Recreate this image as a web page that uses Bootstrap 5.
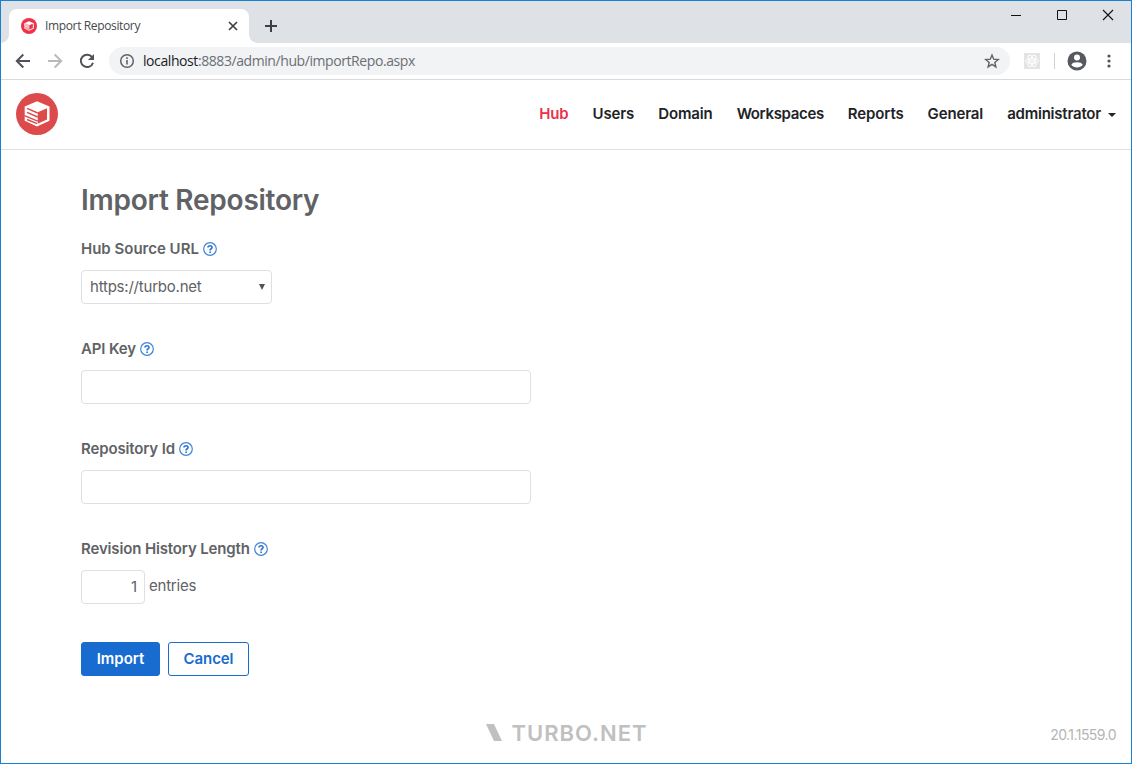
<!DOCTYPE html>
<html lang="en">
<head>
<meta charset="utf-8">
<title>Import Repository</title>
<link href="https://cdn.jsdelivr.net/npm/bootstrap@5.3.0/dist/css/bootstrap.min.css" rel="stylesheet">
<style>
html,body{height:100%;overflow:hidden}
body{font-family:Inter,"Liberation Sans",sans-serif;font-size:15px;line-height:20px;color:#606266;background:#fff}
svg{display:block;flex:none}
.win{height:764px;border:1px solid #1a80d2}
.titlebar{height:42px;background:#dee1e6;padding-left:8px}
.tab{position:relative;width:240px;height:34px;margin-top:8px;background:#fff;border-radius:8px 8px 0 0;padding:0 10px 0 12px;font:12px/34px "Open Sans",sans-serif;color:#45494d}
.tab:before,.tab:after{content:"";position:absolute;bottom:0;width:8px;height:8px}
.tab:before{left:-8px;background:radial-gradient(circle at 0 0,transparent 7.5px,#fff 8px)}
.tab:after{right:-8px;background:radial-gradient(circle at 100% 0,transparent 7.5px,#fff 8px)}
.tab-title{letter-spacing:-.36px}
.new-tab{margin:19px 0 0 16px}
.controls{padding:8px 17px 0 0;gap:34px}
.toolbar{height:37px;border-bottom:1px solid #d9dadc}
.omnibox{width:901px;height:28px;margin-left:14px;background:#f1f3f4;font:14px/28px "Open Sans",sans-serif;color:#6b6f74;padding:0 10px}
.omnibox .url{letter-spacing:-.42px;margin-left:8px}
.omnibox b{font-weight:400;color:#202124}
.site{height:70px;border-bottom:1px solid #dfdfe0;padding:0 15px 2px!important}
.site .navbar-nav{gap:24px}
.site .navbar-nav .nav-link{padding:0;color:#212226;font-weight:600;line-height:20px;letter-spacing:-.13px}
.site .navbar-nav .nav-link.active{color:#ec3049}
.site .navbar-nav .tight{letter-spacing:-.34px}
.site .navbar-nav .user{letter-spacing:-.22px}
.page{padding-left:80px}
h1{font-size:28px;font-weight:600;line-height:36px;margin:32px 0 21px;letter-spacing:-.24px}
.field{height:100px}
.field label{font-weight:600;height:20px;margin-bottom:11px}
.field label svg{margin-bottom:1px}
.field .snug{letter-spacing:-.14px}
.form-control,.form-select{height:34px;border:1px solid #dfdfe1;border-radius:4px;font-size:15px;color:#606266;padding:0 8px;line-height:32px}
.wide{width:450px}
.source{width:191px;letter-spacing:-.22px;background-image:url("data:image/svg+xml,%3csvg xmlns='http://www.w3.org/2000/svg' viewBox='0 0 6 6'%3e%3cpath fill='%23505256' d='M0 0h6L3 6z'/%3e%3c/svg%3e");background-size:6px 6px;background-position:right 6px center}
.count{width:64px;padding:0 7px 2px}
.entries{letter-spacing:-.22px;padding:0 0 2px}
.btn{height:34px;border-radius:3px;padding:0;font-size:15px;font-weight:600;line-height:32px}
.go{width:79px;background:#186bcf;color:#fff;border-color:#186bcf}
.stop{width:81px;color:#186bcf;border-color:#186bcf;background:#fff;letter-spacing:-.1px}
.actions{margin-top:3px}
.foot{height:60px;color:#c0c0c0;padding:0 0 1px 2px}
.brandmark{font-size:22px;font-weight:600;line-height:24px;letter-spacing:1px;margin-left:9px}
.version{right:15px;bottom:18px;font-size:14px;line-height:20px;color:#b5b5b5;letter-spacing:-.55px}
</style>
</head>
<body>
<svg width="0" height="0" class="position-absolute"><defs>
<symbol id="help" viewBox="0 0 14 14"><circle cx="7" cy="7" r="6.3" fill="none" stroke="#3f84d9" stroke-width="1.2"/><path d="M5 5.6C5 3.2 9 3.2 9 5.4 9 6.9 7.1 6.7 7.1 8.4M7.1 9.4v1.6" fill="none" stroke="#2f78d4" stroke-width="1.7"/></symbol>
<symbol id="box" viewBox="0 0 42 42"><circle cx="21" cy="21" r="21"/><path d="M21 8.3 33.5 13.6v14.2L21 33.5 8.7 27.8V13.6z" fill="#fff"/><path d="M21.7 19.2 31 15.2v11.2l-9.3 4.3z"/><path d="M11 15.3 21.7 20M11 19.3l10.7 4.7M8.5 22.7l13.2 5.5M11 26.5l10 4.2" fill="none" stroke="currentColor" stroke-width="1.4"/></symbol>
</defs></svg>
<div class="win d-flex flex-column">
<header class="titlebar d-flex">
  <div class="tab d-flex align-items-center">
    <svg width="16" height="16" style="color:#ee3349" fill="currentColor"><use href="#box"/></svg>
    <span class="tab-title ms-2">Import Repository</span>
    <svg class="ms-auto" width="12" height="12" stroke="#3c4043" stroke-width="1.7"><path d="m2 2 8 8m0-8-8 8"/></svg>
  </div>
  <svg class="new-tab" width="12" height="12" stroke="#3c4043" stroke-width="2"><path d="M6 0v12M0 6h12"/></svg>
  <div class="controls d-flex ms-auto">
    <svg width="12" height="12" fill="#111"><path d="M1 6h10v1H1z"/></svg>
    <svg width="12" height="12" fill="none" stroke="#111"><path d="M1.5 1.5h9v9h-9z"/></svg>
    <svg width="12" height="12" stroke="#111" stroke-width="1.1"><path d="m1 1 10 10m0-10L1 11"/></svg>
  </div>
</header>
<div class="toolbar d-flex align-items-center">
  <svg width="16" height="16" style="margin-left:14px" fill="none" stroke="#505358" stroke-width="2"><path d="M15 8H2M8.3 1.5 1.8 8l6.5 6.5"/></svg>
  <svg width="16" height="16" style="margin-left:16px" fill="none" stroke="#b8babd" stroke-width="2"><path d="M1 8h13M7.7 1.5 14.2 8l-6.5 6.5"/></svg>
  <svg width="16" height="16" style="margin-left:16px" fill="none" stroke="#505358" stroke-width="2"><path d="M13.1 4.2A6.2 6.2 0 1 0 14 9.7"/><path d="M15 1v6H9z" fill="#505358" stroke="none"/></svg>
  <div class="omnibox rounded-pill d-flex align-items-center">
    <svg width="16" height="16" fill="none" stroke="#5f6368"><circle cx="8" cy="8" r="6.3" stroke-width="1.5"/><path d="M8 7v4.5M8 4.3V6" stroke-width="1.6"/></svg>
    <span class="url"><b>localhost</b>:8883/admin/hub/importRepo.aspx</span>
    <svg class="ms-auto" width="16" height="16" fill="none" stroke="#5f6368" stroke-width="1.4"><path d="m8 2 1.7 4.2 4.6.3-3.5 2.9 1.1 4.5L8 11.4l-3.9 2.5 1.1-4.5-3.5-2.9 4.6-.3z"/></svg>
  </div>
  <svg width="16" height="16" style="margin-left:14px" fill="none" stroke="#fff"><path fill="#e4e4e4" stroke="none" d="M0 0h16v16H0z"/><ellipse cx="8" cy="8" rx="6.3" ry="2.5"/><ellipse cx="8" cy="8" rx="6.3" ry="2.5" transform="rotate(60 8 8)"/><ellipse cx="8" cy="8" rx="6.3" ry="2.5" transform="rotate(120 8 8)"/><circle cx="8" cy="8" r="1"/></svg>
  <svg width="1" height="16" style="margin-left:14px"><path fill="#cfd1d4" d="M0 0h1v16H0z"/></svg>
  <svg width="20" height="20" style="margin-left:12px"><circle cx="10" cy="10" r="9.5" fill="#565a60"/><circle cx="10" cy="6.6" r="3" fill="#fff"/><path d="M4.3 13.7c1-3.3 10.4-3.3 11.4 0-2.5 3.6-8.9 3.6-11.4 0z" fill="#fff"/></svg>
  <svg width="4" height="14" style="margin-left:20px" fill="#505358"><circle cx="2" cy="2" r="1.6"/><circle cx="2" cy="7" r="1.6"/><circle cx="2" cy="12" r="1.6"/></svg>
</div>
<nav class="site navbar navbar-expand flex-nowrap">
  <svg width="42" height="42" style="color:#dd4a4c" fill="currentColor"><use href="#box"/></svg>
  <div class="navbar-nav ms-auto align-items-center">
    <a class="nav-link active">Hub</a><a class="nav-link">Users</a><a class="nav-link">Domain</a><a class="nav-link tight">Workspaces</a><a class="nav-link">Reports</a><a class="nav-link">General</a>
    <a class="nav-link user d-flex align-items-center">administrator<svg width="8" height="4" style="margin:2px 0 0 7px" fill="#212226"><path d="M0 0h8L4 4z"/></svg></a>
  </div>
</nav>
<main class="page flex-grow-1">
  <h1>Import Repository</h1>
  <div class="field"><label class="d-flex align-items-center"><span>Hub Source URL</span><svg class="ms-1" width="14" height="14"><use href="#help"/></svg></label>
    <select class="form-select source"><option>https://turbo.net</option></select></div>
  <div class="field"><label class="d-flex align-items-center"><span class="snug">API Key</span><svg class="ms-1" width="14" height="14"><use href="#help"/></svg></label>
    <input class="form-control wide"></div>
  <div class="field"><label class="d-flex align-items-center"><span class="snug">Repository Id</span><svg class="ms-1" width="14" height="14"><use href="#help"/></svg></label>
    <input class="form-control wide"></div>
  <div class="field"><label class="d-flex align-items-center"><span class="snug">Revision History Length</span><svg class="ms-1" width="14" height="14"><use href="#help"/></svg></label>
    <div class="d-flex align-items-center"><input class="form-control count text-end" value="1"><span class="entries ms-1">entries</span></div></div>
  <div class="actions d-flex gap-2"><button class="btn go">Import</button><button class="btn stop">Cancel</button></div>
</main>
<footer class="foot position-relative d-flex justify-content-center align-items-center">
  <svg width="16" height="17" fill="#c0c0c0"><path d="M0 0h8l8 17H8z"/></svg>
  <span class="brandmark">TURBO.NET</span>
  <span class="version position-absolute">20.1.1559.0</span>
</footer>
</div>
<script src="https://cdn.jsdelivr.net/npm/bootstrap@5.3.0/dist/js/bootstrap.bundle.min.js"></script>
</body>
</html>
